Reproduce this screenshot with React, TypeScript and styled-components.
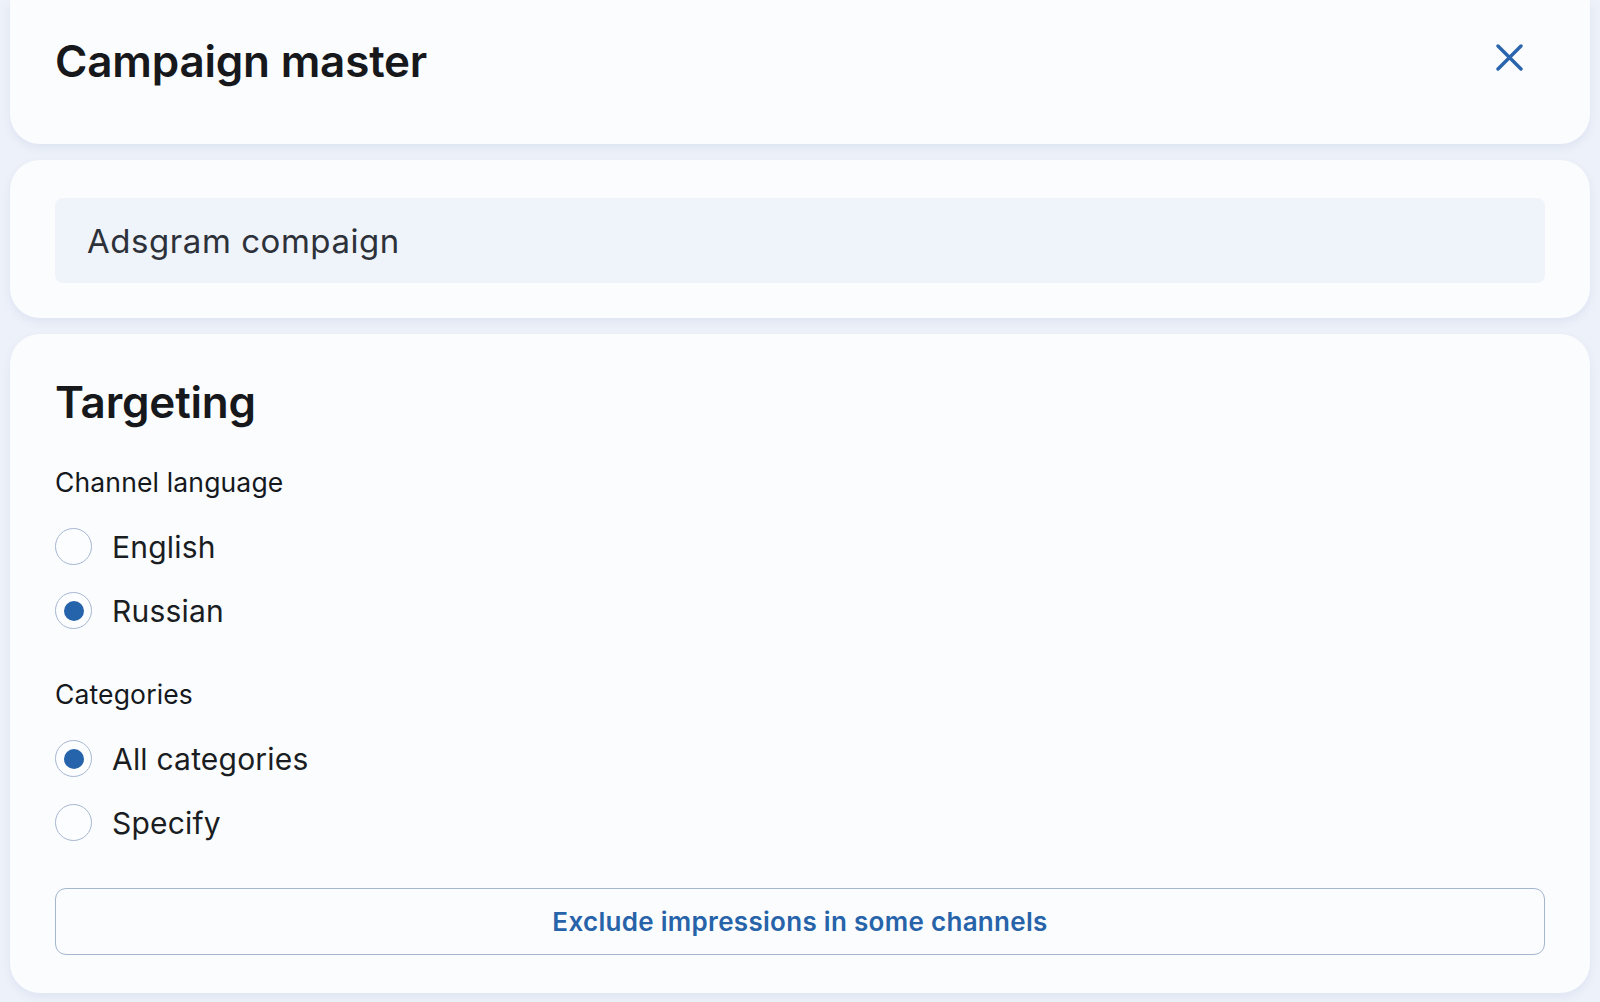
import React, { useState } from 'react'
import { styled, createGlobalStyle } from 'styled-components'

const GlobalStyle = createGlobalStyle`
    * { box-sizing: border-box; }
    html, body {
        margin: 0;
        padding: 0;
        background: #edf1f9;
        font-family: Inter, "Noto Sans", "Liberation Sans", sans-serif;
        color: #16181c;
    }
`

const Page = styled.div`
    min-height: 1002px;
    padding: 0 10px 8px;
    display: flex;
    flex-direction: column;
    gap: 16px;
`

const Card = styled.section<{ $top?: boolean }>`
    background: #fafcfe;
    border-radius: ${(p) => (p.$top ? '0 0 30px 30px' : '30px')};
    box-shadow: 0 4px 10px rgba(52, 92, 160, 0.08);
    padding: 0 45px;
`

const HeaderCard = styled(Card)`
    height: 144px;
    display: flex;
    align-items: center;
    justify-content: space-between;
    padding-bottom: 22px;
`

const Title = styled.h1`
    margin: 0;
    font-size: 44px;
    line-height: 1.2;
    font-weight: 600;
    letter-spacing: -0.2px;
`

const CloseButton = styled.button`
    border: 0;
    background: none;
    padding: 8px;
    margin: 0 14px 8px 0;
    cursor: pointer;
    display: flex;
    color: #2a64ad;
`

const NameCard = styled(Card)`
    padding-top: 38px;
    padding-bottom: 35px;
`

const NameInput = styled.input`
    width: 100%;
    height: 85px;
    border: 0;
    border-radius: 8px;
    background: #eff3fa;
    padding: 0 32px;
    font-family: inherit;
    font-size: 33px;
    letter-spacing: 0.55px;
    color: #2d3139;
    outline: none;
`

const TargetCard = styled(Card)`
    padding-top: 42px;
    padding-bottom: 38px;
    display: flex;
    flex-direction: column;
`

const SectionTitle = styled.h2`
    margin: 0 0 36px;
    font-size: 44px;
    line-height: 1.2;
    font-weight: 600;
    letter-spacing: -0.2px;
`

const Group = styled.div`
    display: flex;
    flex-direction: column;

    & + & {
        margin-top: 46px;
    }
`

const GroupLabel = styled.div`
    font-size: 26.5px;
    line-height: 34px;
    font-weight: 400;
    letter-spacing: 0.15px;
    color: #15181d;
    margin-bottom: 28px;
`

const RadioList = styled.div`
    display: flex;
    flex-direction: column;
    gap: 24px;
`

const RadioRow = styled.label`
    display: flex;
    align-items: center;
    gap: 20px;
    height: 40px;
    font-size: 30px;
    letter-spacing: 0.2px;
    color: #1a1d22;
    cursor: pointer;
`

const RadioCircle = styled.span<{ $on: boolean }>`
    width: 37px;
    height: 37px;
    flex: none;
    border-radius: 50%;
    border: 1.5px solid #a6b7d1;
    background: #fcfdff;
    display: flex;
    align-items: center;
    justify-content: center;

    &::after {
        content: '';
        width: 20px;
        height: 20px;
        border-radius: 50%;
        background: #2563aa;
        display: ${(p) => (p.$on ? 'block' : 'none')};
    }
`

const ExcludeButton = styled.button`
    width: 100%;
    height: 67px;
    margin-top: 45px;
    border: 1.5px solid #a3b5cf;
    border-radius: 11px;
    background: #fafcfe;
    font-family: inherit;
    font-size: 26px;
    font-weight: 600;
    letter-spacing: 0.3px;
    color: #2763a9;
    cursor: pointer;
`

type Option = { id: string; label: string }

function RadioGroup({ label, options, value, onChange }: {
    label: string
    options: Option[]
    value: string
    onChange: (v: string) => void
}) {
    return (
        <Group>
            <GroupLabel>{label}</GroupLabel>
            <RadioList>
                {options.map((o) => (
                    <RadioRow key={o.id} onClick={() => onChange(o.id)}>
                        <RadioCircle $on={value === o.id} />
                        {o.label}
                    </RadioRow>
                ))}
            </RadioList>
        </Group>
    )
}

export default function App() {
    const [lang, setLang] = useState('ru')
    const [cat, setCat] = useState('all')

    return (
        <>
            <GlobalStyle />
            <Page>
                <HeaderCard $top>
                    <Title>Campaign master</Title>
                    <CloseButton aria-label="Close">
                        <svg width="27" height="27" viewBox="0 0 27 27" fill="none" stroke="currentColor" strokeWidth="3.4" strokeLinecap="round">
                            <path d="M2 2 L25 25 M25 2 L2 25" />
                        </svg>
                    </CloseButton>
                </HeaderCard>

                <NameCard>
                    <NameInput defaultValue="Adsgram compaign" />
                </NameCard>

                <TargetCard>
                    <SectionTitle>Targeting</SectionTitle>
                    <RadioGroup
                        label="Channel language"
                        options={[{ id: 'en', label: 'English' }, { id: 'ru', label: 'Russian' }]}
                        value={lang}
                        onChange={setLang}
                    />
                    <RadioGroup
                        label="Categories"
                        options={[{ id: 'all', label: 'All categories' }, { id: 'spec', label: 'Specify' }]}
                        value={cat}
                        onChange={setCat}
                    />
                    <ExcludeButton>Exclude impressions in some channels</ExcludeButton>
                </TargetCard>
            </Page>
        </>
    )
}
